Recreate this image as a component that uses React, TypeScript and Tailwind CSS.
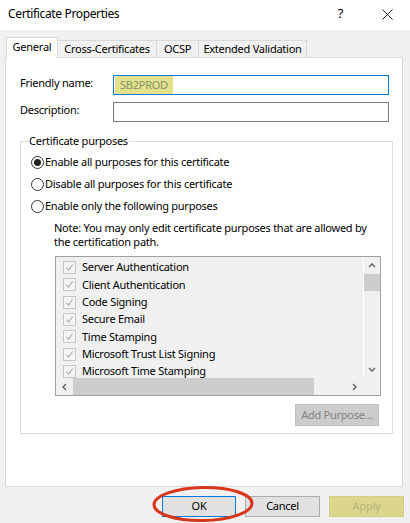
import React from "react";

const purposes = [
  "Server Authentication",
  "Client Authentication",
  "Code Signing",
  "Secure Email",
  "Time Stamping",
  "Microsoft Trust List Signing",
  "Microsoft Time Stamping",
];

function Radio({ checked, label }: { checked?: boolean; label: string }) {
  return (
    <div className="flex h-[22px] items-center pl-[10px]">
      <span className="flex h-[13px] w-[13px] items-center justify-center rounded-full border border-[#333333] bg-white">
        {checked && <span className="h-[7px] w-[7px] rounded-full bg-[#222222]" />}
      </span>
      <span className="ml-[1px]">{label}</span>
    </div>
  );
}

function DisabledCheck() {
  return (
    <span className="flex h-[13px] w-[13px] items-center justify-center border border-[#c6c6c6] bg-[#f4f4f4]">
      <svg width="9" height="9" viewBox="0 0 9 9">
        <path d="M1.5 4.8 L3.6 7 L7.6 1.5" fill="none" stroke="#b2b2b2" strokeWidth="1.2" />
      </svg>
    </span>
  );
}

function Chevron({ dir }: { dir: "up" | "down" | "left" | "right" }) {
  const d = {
    up: "M1 5 L4 2 L7 5",
    down: "M1 2 L4 5 L7 2",
    left: "M5 1 L2 4 L5 7",
    right: "M2 1 L5 4 L2 7",
  }[dir];
  return (
    <svg width="8" height="8" viewBox="0 0 8 8">
      <path d={d} fill="none" stroke="#606060" strokeWidth="1.4" />
    </svg>
  );
}

export default function App() {
  return (
    <div
      className="relative h-[523px] w-[410px] overflow-hidden bg-[#f0f0f0] text-[11px] tracking-[-0.25px] text-black"
      style={{ fontFamily: '"Noto Sans", "Open Sans", sans-serif' }}
    >
      {/* title bar */}
      <div className="flex h-[30px] items-center bg-white pl-[8px] text-[12px] tracking-[-0.35px]">
        <span className="-mt-[2px]">Certificate Properties</span>
        <span className="ml-auto -mt-[2px] text-[13px]">?</span>
        <span className="ml-[39px] mr-[17px] -mt-[2px]">
          <svg width="11" height="11" viewBox="0 0 11 11">
            <path d="M0.5 0.5 L10.5 10.5 M10.5 0.5 L0.5 10.5" stroke="#222" strokeWidth="1" />
          </svg>
        </span>
      </div>

      {/* tabs */}
      <div className="flex h-[27px] items-end pl-[6px]">
        <div className="relative z-10 -mb-px flex h-[21px] w-[52px] items-center justify-center border border-b-0 border-[#d9d9d9] bg-white pb-[2px]">
          General
        </div>
        <div className="flex h-[17px] w-[99px] items-center justify-center border-t border-r border-[#d9d9d9]">
          Cross-Certificates
        </div>
        <div className="flex h-[17px] w-[42px] items-center justify-center border-t border-r border-[#d9d9d9]">
          OCSP
        </div>
        <div className="flex h-[17px] w-[108px] items-center justify-center border-t border-r border-[#d9d9d9]">
          Extended Validation
        </div>
      </div>

      {/* tab panel */}
      <div className="ml-[5px] h-[430px] w-[398px] border border-[#d9d9d9] bg-white pl-[14px] pt-[17px]">
        <div className="flex items-start">
          <span className="w-[93px] leading-[16px]">Friendly name:</span>
          <div className="flex h-[20px] w-[276px] items-center border border-[#0078d7] bg-white pl-[1px]">
            <span className="flex h-[18px] items-center bg-[#e3e28a] px-[5px] text-[#82926c]">SB2PROD</span>
          </div>
        </div>
        <div className="mt-[7px] flex items-start">
          <span className="w-[93px] leading-[16px]">Description:</span>
          <div className="h-[20px] w-[276px] border border-[#7a7a7a] bg-white" />
        </div>

        <fieldset className="mt-[11px] flex w-[373px] flex-col border border-[#dcdcdc] pb-[7px]">
          <legend className="ml-[7px] px-[1px] leading-[16px]">Certificate purposes</legend>
          <div className="mt-[2px]">
            <Radio checked label="Enable all purposes for this certificate" />
            <Radio label="Disable all purposes for this certificate" />
            <Radio label="Enable only the following purposes" />
          </div>
          <p className="mt-[4px] whitespace-nowrap pl-[33px] leading-[14px]">
            Note: You may only edit certificate purposes that are allowed by
            <br />
            the certification path.
          </p>

          {/* purposes list */}
          <div className="ml-[34px] mt-[7px] flex h-[140px] w-[326px] flex-col border border-[#a0a0a0] bg-[#f0f0f0]">
            <div className="flex h-[121px] overflow-hidden">
              <div className="flex-1 overflow-hidden pt-[2px]">
                {purposes.map((p) => (
                  <div key={p} className="flex h-[17.3px] items-center pl-[7px] whitespace-nowrap">
                    <DisabledCheck />
                    <span className="ml-[6px]">{p}</span>
                  </div>
                ))}
              </div>
              <div className="flex w-[17px] flex-col items-center border-l border-white">
                <div className="flex h-[17px] items-center justify-center">
                  <Chevron dir="up" />
                </div>
                <div className="h-[17px] w-full bg-[#cdcdcd]" />
                <div className="flex-1" />
                <div className="flex h-[17px] items-center justify-center">
                  <Chevron dir="down" />
                </div>
              </div>
            </div>
            <div className="flex h-[17px]">
              <div className="flex w-[17px] items-center justify-center">
                <Chevron dir="left" />
              </div>
              <div className="w-[241px] bg-[#cdcdcd]" />
              <div className="flex-1" />
              <div className="flex w-[17px] items-center justify-center">
                <Chevron dir="right" />
              </div>
              <div className="w-[17px]" />
            </div>
          </div>

          <div className="mr-[13px] mt-[8px] flex h-[22px] w-[84px] items-center justify-center self-end border border-[#bfbfbf] bg-[#cccccc] text-[#838383]">
            Add Purpose...
          </div>
        </fieldset>
      </div>

      {/* footer buttons */}
      <div className="flex justify-end gap-[9px] pr-[6px] pt-[9px]">
        <div className="flex h-[21px] w-[74px] items-center justify-center border border-[#0078d7] bg-[#e1e1e1]">OK</div>
        <div className="flex h-[21px] w-[75px] items-center justify-center border border-[#adadad] bg-[#e1e1e1]">Cancel</div>
        <div className="flex h-[21px] w-[75px] items-center justify-center border border-[#d3ce86] bg-[#dcd68c] text-[#b9b47c]">Apply</div>
      </div>

      {/* red annotation around OK */}
      <svg className="absolute left-[150px] top-[484px]" width="106" height="40" viewBox="0 0 106 40">
        <ellipse cx="53" cy="20" rx="49" ry="16.5" fill="none" stroke="#d8351b" strokeWidth="3" transform="rotate(-1 53 20)" />
      </svg>
    </div>
  );
}
